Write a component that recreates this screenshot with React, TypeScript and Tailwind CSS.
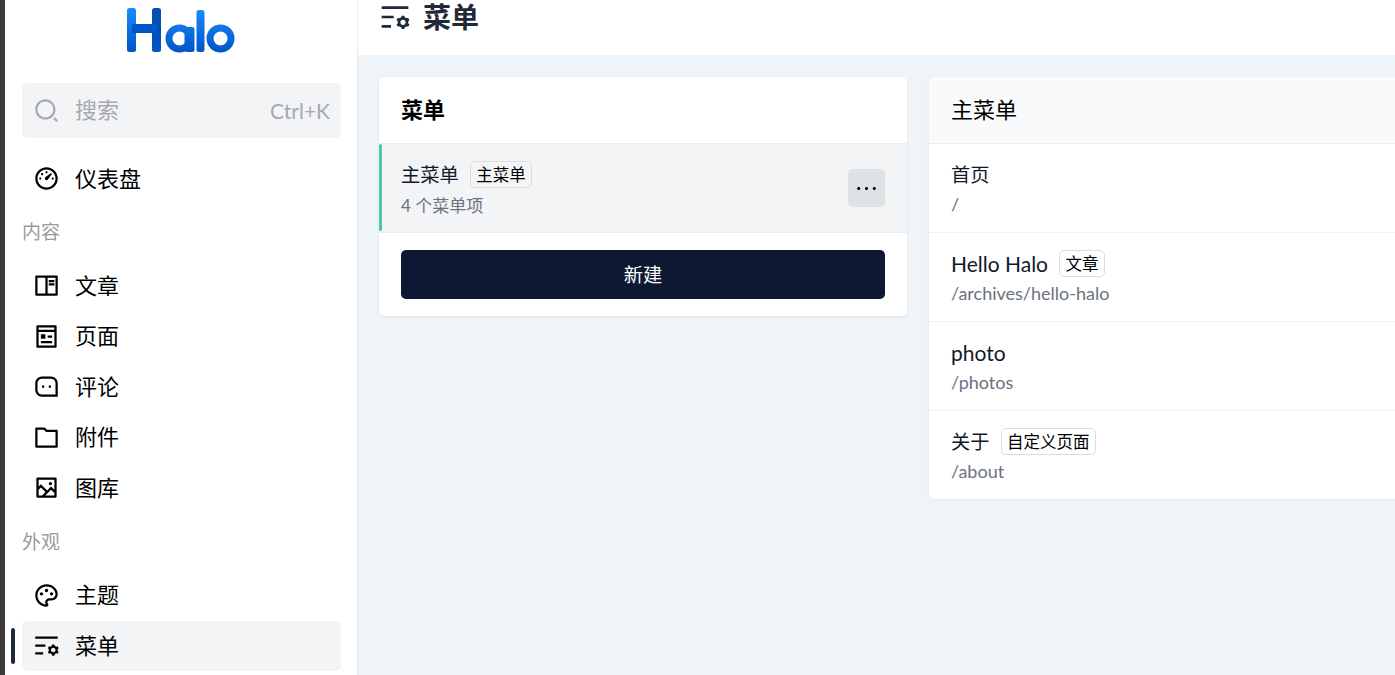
import React from "react";
import {
  RiSearch2Line,
  RiDashboard3Line,
  RiBookReadLine,
  RiPagesLine,
  RiMessage3Line,
  RiFolderLine,
  RiImage2Line,
  RiPaletteLine,
  RiListSettingsLine,
  RiMoreLine,
} from "react-icons/ri";

const font = "font-['Lato','Noto_Sans_CJK_SC',sans-serif]";

function Logo() {
  return (
    <svg width="110" height="46" viewBox="0 0 110 46" className="block">
      <defs>
        <linearGradient id="lg" gradientUnits="userSpaceOnUse" x1="0" y1="0" x2="0" y2="46">
          <stop offset="0" stopColor="#1a8fff" />
          <stop offset="1" stopColor="#0054c6" />
        </linearGradient>
        <linearGradient id="lg2" gradientUnits="userSpaceOnUse" x1="0" y1="0" x2="0" y2="46">
          <stop offset="0" stopColor="#0a4fb0" />
          <stop offset="0.5" stopColor="#004fb8" />
          <stop offset="1" stopColor="#0057c8" />
        </linearGradient>
      </defs>
      <rect x="1" y="1" width="9" height="44" rx="2.5" fill="url(#lg)" />
      <rect x="26" y="1" width="9" height="44" rx="2.5" fill="url(#lg2)" />
      <rect x="6" y="17" width="24" height="9" fill="#0058c8" />
      <circle cx="53.5" cy="31.5" r="10.5" fill="none" stroke="url(#lg)" strokeWidth="7" />
      <rect x="58.5" y="20" width="10" height="25" rx="2.5" fill="url(#lg)" />
      <rect x="70.5" y="3" width="8" height="42" rx="2.5" fill="url(#lg)" />
      <circle cx="94.5" cy="31.5" r="10.5" fill="none" stroke="url(#lg)" strokeWidth="7" />
    </svg>
  );
}

function NavItem({ icon: Icon, label, active }: { icon: React.ComponentType<{ size?: number; className?: string }>; label: string; active?: boolean }) {
  return (
    <div className="relative flex h-[50.5px] items-center">
      {active && <div className="absolute left-[-11px] top-[7.5px] h-[36px] w-[4px] rounded-full bg-[#1e293b]" />}
      <div className={`flex h-[50.5px] flex-1 items-center gap-[15px] rounded-[5px] pl-[11px] text-[22px] text-black ${active ? "bg-[#f3f4f6]" : ""}`}>
        <Icon size={27} className="shrink-0 text-black" />
        <span className="leading-none">{label}</span>
      </div>
    </div>
  );
}

function SectionLabel({ children, className }: { children: React.ReactNode; className?: string }) {
  return <div className={`text-[19px] leading-[28px] text-[#9b9b9b] ${className ?? ""}`}>{children}</div>;
}

function Badge({ children }: { children: React.ReactNode }) {
  return (
    <span className="inline-flex h-[27px] items-center rounded-[5px] border border-[#dcdcdc] px-[5.5px] pt-[1px] text-[16.5px] leading-none text-black">
      {children}
    </span>
  );
}

function MenuRow({ name, badge, sub, last, latin }: { name: string; badge?: string; sub: string; last?: boolean; latin?: boolean }) {
  return (
    <div className={`pl-[22px] pt-[17px] ${last ? "h-[88px]" : "h-[89px] border-b border-[#f0f1f3]"}`}>
      <div className="flex h-[27px] items-center gap-[11px]">
        <span className={`${latin ? "text-[21px]" : "pt-[1px] text-[19.25px]"} leading-none text-[#111827]`}>{name}</span>
        {badge && <Badge>{badge}</Badge>}
      </div>
      <div className="mt-[3px] text-[18px] leading-[26px] text-[#6b7280]">{sub}</div>
    </div>
  );
}

export default function App() {
  return (
    <div className={`${font} flex h-[675px] w-[1395px] overflow-hidden bg-[#eff4f9]`}>
      <div className="h-full w-[5px] shrink-0 bg-[#3a3a3a]" />
      <aside className="h-full w-[353px] shrink-0 border-r border-[#e8ebef] bg-white">
        <div className="flex justify-center pr-[1px] pt-[7px]">
          <Logo />
        </div>
        <div className="pl-[17px] pr-[16px] pt-[30px]">
          <div className="flex h-[55px] items-center rounded-[5px] bg-[#f3f4f6] pl-[11px] pr-[11px] text-[#a5a9b3]">
            <RiSearch2Line size={27} className="shrink-0" />
            <span className="ml-[15px] flex-1 pb-[1px] text-[22px] leading-none">搜索</span>
            <span className="pb-[1px] text-[21px] leading-none">Ctrl+K</span>
          </div>
          <div className="mt-[15.5px]">
            <NavItem icon={RiDashboard3Line} label="仪表盘" />
          </div>
          <SectionLabel className="mt-[14px]">内容</SectionLabel>
          <div className="mt-[14.5px]">
            <NavItem icon={RiBookReadLine} label="文章" />
            <NavItem icon={RiPagesLine} label="页面" />
            <NavItem icon={RiMessage3Line} label="评论" />
            <NavItem icon={RiFolderLine} label="附件" />
            <NavItem icon={RiImage2Line} label="图库" />
          </div>
          <SectionLabel className="mt-[14.5px]">外观</SectionLabel>
          <div className="mt-[14.5px]">
            <NavItem icon={RiPaletteLine} label="主题" />
            <NavItem icon={RiListSettingsLine} label="菜单" active />
          </div>
        </div>
      </aside>
      <main className="min-w-0 flex-1">
        <header className="flex h-[55px] items-start gap-[12px] bg-white pl-[21px]">
          <RiListSettingsLine size={32} className="mt-[1px] shrink-0 text-[#1f2937]" />
          <h1 className="mt-[-1px] text-[28px] font-bold leading-[36px] text-[#1f2937]">菜单</h1>
        </header>
        <div className="flex items-start gap-[22px] pl-[21px] pt-[22px]">
          <section className="w-[528px] shrink-0 overflow-hidden rounded-[5px] bg-white shadow-[0_1px_3px_rgba(0,0,0,0.06)]">
            <div className="flex h-[67px] items-center border-b border-[#eaecef] pb-[1px] pl-[22px] text-[22px] font-bold text-black">菜单</div>
            <div className="relative flex h-[89px] items-start justify-between border-b border-[#eaecef] bg-[#f3f4f6] pl-[22px] pr-[22px] pt-[17px]">
              <div className="absolute bottom-[1px] left-0 top-0 w-[3px] rounded-full bg-[#4fc9a0]" />
              <div>
                <div className="flex h-[27px] items-center gap-[11px]">
                  <span className="pt-[1px] text-[19.25px] leading-none text-[#111827]">主菜单</span>
                  <Badge>主菜单</Badge>
                </div>
                <div className="mt-[5px] text-[17px] leading-[26px] text-[#6b7280]">4 个菜单项</div>
              </div>
              <button className="mt-[8px] flex h-[38px] w-[37px] items-center justify-center rounded-[5px] bg-[#dfe2e5] text-black">
                <RiMoreLine size={25} />
              </button>
            </div>
            <div className="px-[22px] pb-[17px] pt-[17px]">
              <button className="flex h-[49px] w-full items-center justify-center rounded-[5px] bg-[#0d1833] pt-[2px] text-[19.25px] text-white">新建</button>
            </div>
          </section>
          <section className="min-w-0 flex-1 overflow-hidden rounded-l-[5px] bg-white shadow-[0_1px_3px_rgba(0,0,0,0.06)]">
            <div className="flex h-[67px] items-center border-b border-[#eaecef] bg-[#f9fafb] pb-[1px] pl-[22px] text-[22px] text-black">主菜单</div>
            <MenuRow name="首页" sub="/" />
            <MenuRow name="Hello Halo" badge="文章" sub="/archives/hello-halo" latin />
            <MenuRow name="photo" sub="/photos" latin />
            <MenuRow name="关于" badge="自定义页面" sub="/about" last />
          </section>
        </div>
      </main>
    </div>
  );
}
